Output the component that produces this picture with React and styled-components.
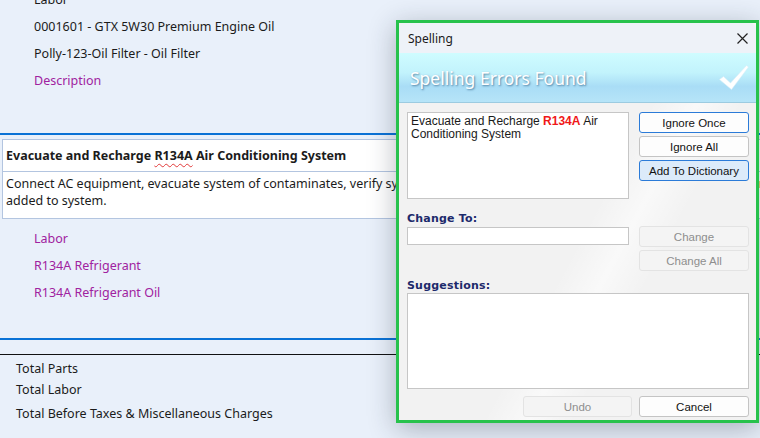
import React from 'react'
import styled, { createGlobalStyle } from 'styled-components'

const GlobalStyle = createGlobalStyle`
  html, body {
    margin: 0;
    padding: 0;
  }
  body {
    width: 760px;
    height: 438px;
    overflow: hidden;
    background: #e9f0fa;
  }
`

const Page = styled.div`
  position: relative;
  width: 760px;
  height: 438px;
  overflow: hidden;
  background: #e9f0fa;
  color: #1b1b1b;
  font-family: "Noto Sans", sans-serif;
  font-size: 12.5px;
`

const ItemList = styled.div`
  display: flex;
  flex-direction: column;
  padding-left: 34px;
  margin-top: ${p => p.$top || 0}px;
`

const Item = styled.div`
  height: 27px;
  line-height: 27px;
  white-space: nowrap;
  color: ${p => (p.$link ? '#a0229f' : '#1b1b1b')};
`

const Rule = styled.div`
  height: ${p => p.$h || 1}px;
  background: ${p => p.$color};
  margin-top: ${p => p.$mt}px;
`

const OpBox = styled.div`
  margin: 4px 0 0 2px;
  width: 1000px;
  background: #fff;
  border: 1px solid #b3c5e0;
`

const OpHeader = styled.div`
  height: 31px;
  line-height: 31px;
  padding-left: 3px;
  font-weight: 700;
  border-bottom: 1px solid #b3c5e0;
  white-space: nowrap;
`

const Squiggle = styled.span`
  text-decoration: underline wavy #e23a3a;
  text-decoration-thickness: 1px;
  text-underline-offset: 3px;
`

const OpText = styled.div`
  padding: 3px 3px 9px;
  line-height: 17px;
  white-space: nowrap;
`

const Totals = styled.div`
  display: flex;
  flex-direction: column;
  padding: 3px 0 0 16px;
`

const TotalRow = styled.div`
  height: 21px;
  line-height: 21px;
  margin-top: ${p => p.$mt || 0}px;
`

/* spelling dialog window, floating over the page */
const Dialog = styled.div`
  position: absolute;
  left: 396px;
  top: 20px;
  width: 363px;
  height: 403px;
  box-sizing: border-box;
  border: 3px solid #27c24c;
  display: flex;
  flex-direction: column;
  background:
    linear-gradient(118deg, transparent 52%, rgba(255,255,255,0.55) 60%, transparent 68%),
    #f2f2f2;
  box-shadow: 0 6px 26px rgba(30, 40, 60, 0.32);
  font-family: "Noto Sans", sans-serif;
`

const TitleBar = styled.div`
  height: 30px;
  flex: none;
  display: flex;
  align-items: center;
  justify-content: space-between;
  padding: 0 8px 0 9px;
  background: #eef2f8;
  font-size: 12px;
  color: #1a1a1a;
  border-top-left-radius: 6px;
  border-top-right-radius: 6px;
`

const Banner = styled.div`
  height: 50px;
  flex: none;
  display: flex;
  align-items: center;
  justify-content: space-between;
  padding: 0 7px 0 11px;
  box-sizing: border-box;
  border-bottom: 1px solid #9ccbe0;
  background: linear-gradient(180deg, #cffcff 0%, #c2f3fc 40%, #a9ddf6 68%, #b6e4f8 100%);
`

const BannerTitle = styled.div`
  font-size: 17.5px;
  color: #fff;
  text-shadow: 1px 1px 2px rgba(40, 90, 130, 0.7);
`

const Body = styled.div`
  flex: 1;
  display: grid;
  grid-template-columns: 222px 110px;
  column-gap: 10px;
  grid-template-rows: 87px 27px 45px 22px 96px 1fr;
  padding: 9px 7px 0 8px;
`

const TextPanel = styled.div`
  box-sizing: border-box;
  background: #fff;
  border: 1px solid #c6c6c6;
  padding: 2px 3px;
  font-family: "Liberation Sans", Arial, sans-serif;
  font-size: 12px;
  line-height: 13px;
  color: #1a1a1a;
`

const Misspelled = styled.b`
  color: #f01818;
`

const ButtonStack = styled.div`
  display: flex;
  flex-direction: column;
  gap: 3px;
`

const Button = styled.div`
  box-sizing: border-box;
  height: 21px;
  width: ${p => p.$w || 110}px;
  display: flex;
  align-items: center;
  justify-content: center;
  border-radius: 3px;
  font-family: "Liberation Sans", Arial, sans-serif;
  font-size: 11.5px;
  color: ${p => (p.$disabled ? '#8e8e8e' : '#111')};
  background: ${p => (p.$active ? '#dcebfa' : p.$disabled ? '#f4f4f4' : '#fdfdfd')};
  border: 1px solid
    ${p => (p.$primary ? '#2b7bd8' : p.$disabled ? '#e3e3e3' : '#c4c4c4')};
`

const Label = styled.div`
  align-self: end;
  grid-column: ${p => (p.$span ? '1 / span 2' : 'auto')};
  font-family: "DejaVu Sans", Verdana, sans-serif;
  font-size: 11px;
  font-weight: 700;
  letter-spacing: 0.2px;
  color: #1d2a6b;
  margin-bottom: ${p => p.$mb || 0}px;
`

const Field = styled.div`
  box-sizing: border-box;
  height: 18px;
  margin-top: 1px;
  background: #fff;
  border: 1px solid #c6c6c6;
`

const ListBox = styled.div`
  grid-column: 1 / span 2;
  box-sizing: border-box;
  background: #fff;
  border: 1px solid #c6c6c6;
`

const Footer = styled.div`
  grid-column: 1 / span 2;
  display: flex;
  justify-content: flex-end;
  gap: 7px;
  padding-top: 7px;
`

const CloseIcon = () => (
  <svg width="11" height="11" viewBox="0 0 11 11">
    <path d="M0.5 0.5 L10.5 10.5 M10.5 0.5 L0.5 10.5" stroke="#222" strokeWidth="1.2" fill="none" />
  </svg>
)

const CheckIcon = () => (
  <svg width="30" height="26" viewBox="0 0 30 26">
    <path
      d="M0.5 14.5 L4.5 11.5 L11.5 18 L27.5 0.5 L29.5 2 L12.5 24.5 Z"
      fill="#ffffff"
      stroke="#d8eef8"
      strokeWidth="0.6"
    />
  </svg>
)

export default function App() {
  return (
    <Page>
      <GlobalStyle />
      <ItemList $top={-14}>
        <Item>Labor</Item>
        <Item>0001601 - GTX 5W30 Premium Engine Oil</Item>
        <Item>Polly-123-Oil Filter - Oil Filter</Item>
        <Item $link>Description</Item>
      </ItemList>

      <Rule $h={2} $color="#0a72d6" $mt={39} />

      <OpBox>
        <OpHeader>
          Evacuate and Recharge <Squiggle>R134A</Squiggle> Air Conditioning System
        </OpHeader>
        <OpText>
          Connect AC equipment, evacuate system of contaminates, verify system integrity, recharge with R134A refrigerant and oil. Amount of refrigerant and oil
          <br />
          added to system.
        </OpText>
      </OpBox>

      <ItemList $top={6}>
        <Item $link>Labor</Item>
        <Item $link>R134A Refrigerant</Item>
        <Item $link>R134A Refrigerant Oil</Item>
      </ItemList>

      <Rule $h={2} $color="#0a72d6" $mt={32} />
      <Rule $h={1} $color="#111" $mt={14} />

      <Totals>
        <TotalRow>Total Parts</TotalRow>
        <TotalRow>Total Labor</TotalRow>
        <TotalRow $mt={3}>Total Before Taxes &amp; Miscellaneous Charges</TotalRow>
      </Totals>

      <Dialog>
        <TitleBar>
          <span>Spelling</span>
          <CloseIcon />
        </TitleBar>
        <Banner>
          <BannerTitle>Spelling Errors Found</BannerTitle>
          <CheckIcon />
        </Banner>
        <Body>
          <TextPanel>
            Evacuate and Recharge <Misspelled>R134A</Misspelled> Air Conditioning System
          </TextPanel>
          <ButtonStack>
            <Button $primary>Ignore Once</Button>
            <Button>Ignore All</Button>
            <Button $primary $active>Add To Dictionary</Button>
          </ButtonStack>

          <Label $mb={1}>Change To:</Label>
          <div />

          <Field />
          <ButtonStack>
            <Button $disabled>Change</Button>
            <Button $disabled>Change All</Button>
          </ButtonStack>

          <Label $span $mb={1}>Suggestions:</Label>
          <ListBox />

          <Footer>
            <Button $disabled $w={109}>Undo</Button>
            <Button>Cancel</Button>
          </Footer>
        </Body>
      </Dialog>
    </Page>
  )
}
